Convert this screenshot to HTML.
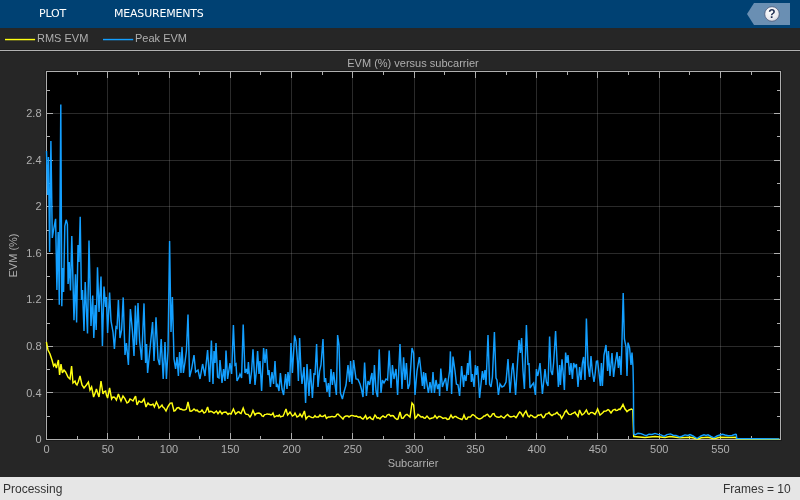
<!DOCTYPE html>
<html><head><meta charset="utf-8"><title>EVM</title>
<style>
html,body{margin:0;padding:0;background:#262626;}
body{width:800px;height:500px;overflow:hidden;position:relative;font-family:"Liberation Sans",sans-serif;}
#tb{position:absolute;left:0;top:0;width:800px;height:28px;background:#004173;}
#tb span{position:absolute;top:7px;font:11px "DejaVu Sans",sans-serif;color:#fff;letter-spacing:-0.2px;will-change:transform;}
#help{position:absolute;left:747px;top:3px;width:43px;height:22px;}
#leg{position:absolute;left:0;top:28px;width:800px;height:21px;background:#262626;border-bottom:1px solid #202020;box-shadow:0 1px 0 #b2b2b2,0 2px 0 #202020;}
#leg span{position:absolute;top:4px;font-size:11px;color:#afafaf;will-change:transform;}
#st{position:absolute;left:0;top:477px;width:800px;height:23px;background:#e6e6e6;font-size:12px;color:#333;}
#st span{position:absolute;top:5px;will-change:transform;}
svg text{font-family:"Liberation Sans",sans-serif;font-size:11px;fill:#afafaf;}
</style></head><body>
<div id="tb"><span style="left:39px">PLOT</span><span style="left:114px">MEASUREMENTS</span>
<svg id="help" viewBox="0 0 43 22" style="will-change:transform"><polygon points="0,11 7,0 43,0 43,22 7,22" fill="#6a8fb3"/>
<defs><radialGradient id="hg" cx="0.4" cy="0.3" r="0.8"><stop offset="0" stop-color="#fff"/><stop offset="0.7" stop-color="#e8e8ee"/><stop offset="1" stop-color="#b9bccb"/></radialGradient></defs>
<circle cx="25" cy="11" r="7.3" fill="url(#hg)" stroke="#4a5878" stroke-width="0.8"/>
<text x="24.9" y="15.2" text-anchor="middle" style="font:bold 12px 'Liberation Sans',sans-serif;fill:#1d2b4f">?</text></svg>
</div>
<div id="leg"><span style="left:37px">RMS EVM</span><span style="left:135px">Peak EVM</span></div>
<svg width="800" height="500" style="position:absolute;left:0;top:0;will-change:transform" viewBox="0 0 800 500">
<line x1="5" y1="39.55" x2="35.1" y2="39.55" stroke="#ffff11" stroke-width="1.45"/><line x1="103" y1="39.55" x2="133.2" y2="39.55" stroke="#139fff" stroke-width="1.45"/>
<rect x="45.5" y="70.5" width="736" height="370" fill="none" stroke="#1a1a1a" stroke-width="1"/>
<rect x="46.5" y="71.5" width="734" height="368" fill="#000" stroke="#afafaf" stroke-width="1"/>
<g stroke="#afafaf" stroke-opacity="0.24" stroke-width="1" shape-rendering="crispEdges"><line x1="107.5" y1="72" x2="107.5" y2="439"/><line x1="169.5" y1="72" x2="169.5" y2="439"/><line x1="230.5" y1="72" x2="230.5" y2="439"/><line x1="291.5" y1="72" x2="291.5" y2="439"/><line x1="352.5" y1="72" x2="352.5" y2="439"/><line x1="414.5" y1="72" x2="414.5" y2="439"/><line x1="475.5" y1="72" x2="475.5" y2="439"/><line x1="536.5" y1="72" x2="536.5" y2="439"/><line x1="597.5" y1="72" x2="597.5" y2="439"/><line x1="659.5" y1="72" x2="659.5" y2="439"/><line x1="720.5" y1="72" x2="720.5" y2="439"/><line x1="47" y1="392.5" x2="780" y2="392.5"/><line x1="47" y1="346.5" x2="780" y2="346.5"/><line x1="47" y1="299.5" x2="780" y2="299.5"/><line x1="47" y1="253.5" x2="780" y2="253.5"/><line x1="47" y1="206.5" x2="780" y2="206.5"/><line x1="47" y1="160.5" x2="780" y2="160.5"/><line x1="47" y1="113.5" x2="780" y2="113.5"/></g>
<g stroke="#afafaf" stroke-width="1" shape-rendering="crispEdges"><line x1="77.5" y1="439" x2="77.5" y2="436"/><line x1="77.5" y1="72" x2="77.5" y2="75"/><line x1="107.5" y1="439" x2="107.5" y2="433"/><line x1="107.5" y1="72" x2="107.5" y2="78"/><line x1="138.5" y1="439" x2="138.5" y2="436"/><line x1="138.5" y1="72" x2="138.5" y2="75"/><line x1="169.5" y1="439" x2="169.5" y2="433"/><line x1="169.5" y1="72" x2="169.5" y2="78"/><line x1="199.5" y1="439" x2="199.5" y2="436"/><line x1="199.5" y1="72" x2="199.5" y2="75"/><line x1="230.5" y1="439" x2="230.5" y2="433"/><line x1="230.5" y1="72" x2="230.5" y2="78"/><line x1="260.5" y1="439" x2="260.5" y2="436"/><line x1="260.5" y1="72" x2="260.5" y2="75"/><line x1="291.5" y1="439" x2="291.5" y2="433"/><line x1="291.5" y1="72" x2="291.5" y2="78"/><line x1="322.5" y1="439" x2="322.5" y2="436"/><line x1="322.5" y1="72" x2="322.5" y2="75"/><line x1="352.5" y1="439" x2="352.5" y2="433"/><line x1="352.5" y1="72" x2="352.5" y2="78"/><line x1="383.5" y1="439" x2="383.5" y2="436"/><line x1="383.5" y1="72" x2="383.5" y2="75"/><line x1="414.5" y1="439" x2="414.5" y2="433"/><line x1="414.5" y1="72" x2="414.5" y2="78"/><line x1="444.5" y1="439" x2="444.5" y2="436"/><line x1="444.5" y1="72" x2="444.5" y2="75"/><line x1="475.5" y1="439" x2="475.5" y2="433"/><line x1="475.5" y1="72" x2="475.5" y2="78"/><line x1="506.5" y1="439" x2="506.5" y2="436"/><line x1="506.5" y1="72" x2="506.5" y2="75"/><line x1="536.5" y1="439" x2="536.5" y2="433"/><line x1="536.5" y1="72" x2="536.5" y2="78"/><line x1="567.5" y1="439" x2="567.5" y2="436"/><line x1="567.5" y1="72" x2="567.5" y2="75"/><line x1="597.5" y1="439" x2="597.5" y2="433"/><line x1="597.5" y1="72" x2="597.5" y2="78"/><line x1="628.5" y1="439" x2="628.5" y2="436"/><line x1="628.5" y1="72" x2="628.5" y2="75"/><line x1="659.5" y1="439" x2="659.5" y2="433"/><line x1="659.5" y1="72" x2="659.5" y2="78"/><line x1="689.5" y1="439" x2="689.5" y2="436"/><line x1="689.5" y1="72" x2="689.5" y2="75"/><line x1="720.5" y1="439" x2="720.5" y2="433"/><line x1="720.5" y1="72" x2="720.5" y2="78"/><line x1="751.5" y1="439" x2="751.5" y2="436"/><line x1="751.5" y1="72" x2="751.5" y2="75"/><line x1="47" y1="416.5" x2="50" y2="416.5"/><line x1="780" y1="416.5" x2="777" y2="416.5"/><line x1="47" y1="392.5" x2="53" y2="392.5"/><line x1="780" y1="392.5" x2="774" y2="392.5"/><line x1="47" y1="369.5" x2="50" y2="369.5"/><line x1="780" y1="369.5" x2="777" y2="369.5"/><line x1="47" y1="346.5" x2="53" y2="346.5"/><line x1="780" y1="346.5" x2="774" y2="346.5"/><line x1="47" y1="323.5" x2="50" y2="323.5"/><line x1="780" y1="323.5" x2="777" y2="323.5"/><line x1="47" y1="299.5" x2="53" y2="299.5"/><line x1="780" y1="299.5" x2="774" y2="299.5"/><line x1="47" y1="276.5" x2="50" y2="276.5"/><line x1="780" y1="276.5" x2="777" y2="276.5"/><line x1="47" y1="253.5" x2="53" y2="253.5"/><line x1="780" y1="253.5" x2="774" y2="253.5"/><line x1="47" y1="230.5" x2="50" y2="230.5"/><line x1="780" y1="230.5" x2="777" y2="230.5"/><line x1="47" y1="206.5" x2="53" y2="206.5"/><line x1="780" y1="206.5" x2="774" y2="206.5"/><line x1="47" y1="183.5" x2="50" y2="183.5"/><line x1="780" y1="183.5" x2="777" y2="183.5"/><line x1="47" y1="160.5" x2="53" y2="160.5"/><line x1="780" y1="160.5" x2="774" y2="160.5"/><line x1="47" y1="136.5" x2="50" y2="136.5"/><line x1="780" y1="136.5" x2="777" y2="136.5"/><line x1="47" y1="113.5" x2="53" y2="113.5"/><line x1="780" y1="113.5" x2="774" y2="113.5"/><line x1="47" y1="90.5" x2="50" y2="90.5"/><line x1="780" y1="90.5" x2="777" y2="90.5"/></g>
<text x="413" y="67" text-anchor="middle">EVM (%) versus subcarrier</text>
<text x="413" y="467" text-anchor="middle">Subcarrier</text>
<text transform="translate(17,255.5) rotate(-90)" text-anchor="middle">EVM (%)</text>
<text x="46.5" y="453" text-anchor="middle">0</text><text x="107.8" y="453" text-anchor="middle">50</text><text x="169.0" y="453" text-anchor="middle">100</text><text x="230.3" y="453" text-anchor="middle">150</text><text x="291.6" y="453" text-anchor="middle">200</text><text x="352.8" y="453" text-anchor="middle">250</text><text x="414.1" y="453" text-anchor="middle">300</text><text x="475.4" y="453" text-anchor="middle">350</text><text x="536.7" y="453" text-anchor="middle">400</text><text x="597.9" y="453" text-anchor="middle">450</text><text x="659.2" y="453" text-anchor="middle">500</text><text x="720.5" y="453" text-anchor="middle">550</text>
<text x="41.5" y="443.1" text-anchor="end">0</text><text x="41.5" y="396.5" text-anchor="end">0.4</text><text x="41.5" y="350.0" text-anchor="end">0.8</text><text x="41.5" y="303.4" text-anchor="end">1.2</text><text x="41.5" y="256.8" text-anchor="end">1.6</text><text x="41.5" y="210.2" text-anchor="end">2</text><text x="41.5" y="163.7" text-anchor="end">2.4</text><text x="41.5" y="117.1" text-anchor="end">2.8</text>
<path d="M46.4 342.0 L48.0 350.0 L49.0 352.0 L50.0 354.0 L52.0 360.0 L53.6 366.0 L55.0 364.0 L56.4 368.0 L57.5 363.5 L58.4 360.0 L59.6 375.0 L61.0 364.0 L62.4 373.0 L64.0 370.0 L65.6 372.0 L68.0 377.0 L70.0 379.0 L71.6 366.0 L73.0 383.0 L75.0 381.0 L75.9 383.8 L77.0 385.0 L78.4 381.5 L80.0 376.0 L82.0 385.0 L84.0 388.0 L86.4 385.0 L88.4 382.0 L90.0 390.0 L91.6 387.0 L93.6 397.0 L95.5 392.1 L96.4 389.0 L98.0 394.1 L99.0 397.0 L101.0 381.0 L103.0 394.0 L104.1 391.8 L105.6 391.0 L106.5 395.4 L107.6 398.0 L109.6 388.0 L111.6 399.0 L112.7 397.2 L114.0 397.0 L115.1 397.9 L116.4 400.0 L118.4 394.0 L120.0 398.4 L121.0 401.0 L123.0 396.0 L124.9 398.6 L127.0 403.0 L128.6 401.9 L130.0 399.0 L131.1 399.5 L133.0 401.0 L134.7 397.6 L135.6 396.0 L137.0 405.0 L139.0 401.0 L140.9 402.3 L142.0 402.0 L144.0 399.0 L146.0 407.0 L147.0 404.8 L148.0 403.0 L149.4 404.5 L151.0 405.0 L151.9 404.8 L153.0 404.0 L154.4 407.0 L156.4 402.0 L158.0 405.2 L159.0 408.0 L160.5 406.8 L162.0 405.0 L162.9 407.1 L164.1 407.9 L166.0 411.0 L167.8 406.9 L169.0 405.0 L170.3 403.1 L172.0 403.0 L174.0 411.0 L175.2 410.7 L177.0 408.0 L178.8 407.5 L180.1 409.2 L181.0 409.0 L182.5 409.7 L184.0 410.0 L185.0 409.9 L186.4 409.0 L188.0 402.0 L190.0 411.0 L191.1 411.2 L192.3 410.7 L194.0 409.0 L194.0 409.0 L196.0 410.8 L197.0 410.0 L198.4 411.6 L199.6 412.0 L200.9 411.5 L202.0 410.0 L204.0 413.0 L205.6 412.0 L207.6 407.0 L209.0 412.0 L210.7 411.3 L212.0 411.6 L214.0 413.0 L216.4 411.0 L218.0 413.6 L220.0 411.0 L222.0 414.0 L223.0 412.6 L224.2 412.3 L226.0 412.0 L228.0 414.4 L229.1 413.4 L231.0 414.0 L233.4 409.0 L235.6 414.0 L238.0 412.0 L238.9 411.8 L240.1 413.2 L241.0 413.6 L243.2 408.0 L245.0 413.0 L246.2 414.2 L248.0 414.4 L250.0 417.0 L251.1 415.4 L253.0 410.4 L255.0 415.0 L256.0 413.7 L257.3 413.2 L259.0 413.0 L260.9 414.1 L262.0 416.0 L263.4 416.4 L264.6 414.6 L266.0 414.4 L267.1 413.9 L268.3 414.2 L269.5 414.3 L271.0 415.0 L272.0 414.4 L273.0 413.0 L274.4 417.0 L275.6 416.4 L277.0 415.6 L278.1 416.3 L279.3 414.9 L280.5 416.8 L282.0 416.4 L283.0 416.2 L284.0 414.0 L286.0 409.0 L287.6 415.0 L289.1 413.3 L290.0 412.0 L292.4 416.0 L294.0 415.0 L295.0 413.0 L297.0 417.0 L298.9 416.0 L300.0 414.0 L302.0 417.0 L304.4 411.0 L306.0 419.0 L307.5 417.0 L309.0 416.0 L310.0 416.6 L312.0 417.6 L313.6 417.5 L315.0 415.6 L316.1 417.1 L317.0 417.0 L318.5 417.0 L320.0 415.0 L321.0 416.2 L323.0 416.4 L325.0 415.0 L326.4 418.4 L328.3 417.0 L330.0 417.0 L332.0 416.4 L334.0 417.0 L335.7 416.3 L336.9 414.3 L338.0 414.0 L339.4 415.6 L341.0 417.0 L343.0 419.0 L344.3 416.8 L346.0 416.0 L347.9 416.0 L349.0 417.0 L350.4 415.9 L351.6 415.4 L353.0 415.6 L354.0 416.0 L355.3 416.3 L356.5 416.0 L358.0 417.0 L359.0 417.2 L360.2 416.8 L361.4 418.1 L363.0 419.0 L363.9 418.0 L365.6 415.6 L367.0 419.0 L368.8 417.6 L370.0 417.0 L371.2 418.6 L373.0 419.6 L375.0 415.0 L376.1 416.3 L377.0 418.0 L378.6 417.7 L380.0 419.0 L381.0 417.5 L383.0 416.0 L384.7 417.2 L386.0 417.0 L387.2 415.0 L389.0 414.4 L390.8 416.2 L392.0 415.6 L393.3 415.7 L395.0 418.0 L397.0 419.5 L398.0 419.0 L400.0 412.0 L401.6 418.0 L403.1 418.2 L404.0 417.0 L405.5 415.1 L407.0 414.4 L408.0 415.2 L410.0 417.0 L412.0 403.0 L413.6 405.0 L415.0 418.4 L416.6 416.8 L418.0 414.4 L419.0 415.1 L421.0 417.0 L422.7 416.7 L424.0 418.0 L425.1 418.2 L427.0 416.0 L429.6 419.0 L432.0 418.0 L433.7 417.6 L435.0 415.6 L437.0 418.4 L438.6 416.5 L440.0 416.4 L441.1 417.0 L443.0 418.4 L444.7 417.9 L446.0 418.0 L447.2 419.4 L449.0 419.0 L451.0 415.0 L452.1 417.0 L453.0 418.0 L454.6 416.5 L456.0 416.4 L457.0 417.4 L459.0 418.4 L460.7 419.0 L462.0 419.6 L463.1 417.5 L464.0 415.0 L465.6 419.0 L466.8 419.2 L468.0 417.1 L469.0 417.0 L470.5 417.1 L472.0 415.0 L472.9 414.5 L475.0 416.0 L476.6 417.7 L478.0 418.4 L479.1 418.9 L480.3 418.8 L482.0 418.0 L484.0 416.0 L485.0 416.0 L486.4 414.7 L487.6 414.4 L488.9 416.2 L490.0 417.0 L491.3 416.0 L492.5 413.8 L494.0 413.6 L495.0 415.8 L497.0 417.0 L498.7 417.3 L499.9 417.1 L501.0 416.0 L502.3 417.0 L504.0 418.0 L506.0 415.7 L507.6 414.4 L508.5 415.5 L509.7 416.5 L511.0 417.0 L513.0 416.4 L514.0 416.0 L516.0 417.6 L517.0 416.3 L518.3 413.9 L519.6 412.0 L520.7 412.6 L521.9 414.6 L523.0 416.4 L524.4 413.3 L526.0 411.0 L528.0 416.0 L529.3 416.9 L530.5 415.1 L532.0 415.6 L533.0 416.6 L535.0 417.6 L536.7 416.6 L538.0 415.0 L539.1 415.3 L541.0 414.4 L543.0 417.6 L544.0 417.4 L546.0 414.0 L547.7 413.7 L549.0 412.4 L550.1 414.2 L552.0 415.6 L553.8 414.1 L555.0 414.0 L557.0 412.4 L558.7 414.7 L560.0 415.0 L561.6 418.4 L563.6 415.0 L564.8 412.2 L566.4 410.4 L567.3 412.3 L569.0 414.4 L571.0 414.6 L572.0 413.6 L573.4 413.1 L575.0 412.0 L575.9 413.9 L577.1 415.0 L578.0 416.4 L579.6 410.0 L580.8 412.7 L582.0 415.0 L584.0 413.6 L586.4 410.0 L588.1 413.8 L589.0 414.4 L590.6 412.6 L592.0 412.4 L593.0 412.9 L595.0 414.4 L596.7 411.1 L597.6 409.0 L600.0 415.0 L601.6 413.8 L603.0 412.4 L604.0 411.2 L606.0 411.0 L608.0 409.6 L608.9 410.1 L611.0 413.0 L613.0 410.0 L615.1 409.4 L616.0 410.4 L617.5 410.2 L619.0 409.0 L620.0 409.5 L621.0 408.0 L623.0 404.4 L625.0 409.0 L626.1 410.3 L627.0 411.6 L629.0 410.0 L631.6 409.0 L632.8 410.0 L633.7 436.5 L645.0 437.5 L655.0 436.5 L665.0 437.5 L670.0 436.5 L680.0 437.8 L690.0 437.2 L694.0 438.0 L697.5 439.2 L701.0 437.8 L708.0 437.2 L714.0 438.8 L720.0 437.2 L730.0 437.5 L736.0 437.2 L736.6 439.1 L779.3 439.2" fill="none" stroke="#ffff11" stroke-width="1.45" stroke-linejoin="miter" stroke-miterlimit="3"/>
<path d="M46.5 151.0 L47.6 195.0 L48.5 157.0 L49.6 252.0 L50.9 141.0 L52.3 238.0 L53.9 228.0 L55.6 218.8 L56.9 290.0 L58.2 232.0 L59.3 304.7 L60.8 104.5 L61.8 306.3 L62.7 268.0 L63.6 292.0 L64.8 226.0 L66.2 219.8 L67.4 224.0 L68.1 284.0 L69.2 262.0 L70.5 290.5 L71.8 236.0 L74.0 320.3 L75.5 274.3 L76.6 322.5 L78.0 245.0 L79.0 262.0 L80.2 216.7 L81.5 300.0 L82.5 290.0 L84.0 331.0 L85.2 282.0 L87.5 333.5 L89.0 240.4 L91.0 326.0 L92.7 295.5 L93.8 338.0 L95.2 305.0 L96.2 330.0 L97.5 267.3 L99.0 312.0 L101.0 276.5 L102.4 346.0 L104.0 286.5 L105.6 307.0 L106.4 297.0 L107.6 333.0 L109.6 292.6 L111.0 321.0 L113.0 332.0 L114.4 349.0 L116.0 327.0 L117.0 328.0 L118.4 300.0 L120.0 338.0 L121.6 330.0 L123.2 297.4 L125.0 355.0 L126.4 343.0 L128.4 365.0 L130.4 309.0 L132.4 331.0 L134.0 356.0 L135.4 305.4 L136.4 345.0 L138.0 303.0 L139.6 341.0 L141.6 360.0 L144.0 303.4 L145.6 363.0 L146.6 344.0 L147.6 373.0 L150.0 349.0 L152.6 322.0 L154.0 361.0 L156.0 317.4 L158.0 359.0 L159.6 365.0 L161.2 339.0 L163.2 379.0 L165.0 342.0 L166.4 379.0 L168.0 351.0 L169.6 241.0 L171.0 332.0 L172.4 297.0 L174.0 359.0 L175.6 369.0 L177.0 357.0 L178.4 376.0 L179.6 352.0 L181.0 373.0 L182.0 347.0 L183.4 373.0 L185.0 362.0 L186.4 351.0 L188.0 314.6 L189.6 377.0 L191.6 369.0 L194.0 355.0 L195.6 372.0 L198.0 370.0 L200.0 379.0 L202.6 364.0 L205.0 376.0 L205.0 375.0 L207.6 350.0 L209.6 382.0 L211.4 340.6 L213.0 384.0 L214.0 351.0 L215.0 363.0 L216.0 343.0 L217.6 377.0 L219.0 378.0 L220.0 360.0 L222.0 383.0 L223.6 369.0 L225.0 381.0 L226.0 350.6 L227.6 379.0 L230.0 363.0 L231.6 374.0 L233.4 325.0 L235.0 365.0 L236.0 364.0 L237.0 381.0 L238.9 377.1 L240.0 374.0 L241.6 378.0 L243.2 324.6 L245.0 373.0 L246.4 369.0 L247.6 374.0 L248.4 362.0 L250.0 384.0 L251.6 371.0 L253.0 349.4 L255.0 385.0 L256.4 371.0 L257.6 351.0 L259.0 374.0 L260.0 361.0 L261.6 391.0 L263.6 348.0 L265.0 363.0 L266.4 349.0 L268.0 375.0 L269.0 370.0 L270.4 387.0 L272.0 372.0 L273.6 384.0 L275.0 361.0 L276.4 387.0 L277.6 385.0 L279.0 391.0 L280.4 373.0 L282.0 389.0 L283.6 395.0 L285.6 374.0 L287.0 389.0 L288.0 372.0 L289.6 386.0 L291.0 343.0 L292.4 373.0 L294.6 335.4 L296.0 341.0 L297.6 363.0 L298.4 381.0 L299.6 338.0 L301.0 371.0 L302.0 384.0 L304.0 367.0 L305.6 403.0 L307.0 364.0 L309.0 396.0 L310.4 369.0 L312.4 398.0 L314.0 373.0 L315.0 375.0 L316.6 344.0 L318.0 387.0 L319.6 371.0 L321.0 365.0 L323.0 339.0 L324.4 382.0 L325.6 378.0 L327.0 392.0 L328.4 383.0 L329.6 397.0 L331.0 369.0 L332.4 385.0 L333.6 372.0 L335.0 384.0 L336.4 395.0 L337.6 335.0 L339.0 345.0 L340.4 393.0 L342.4 399.0 L344.0 392.0 L346.0 385.0 L348.0 365.0 L349.6 382.0 L350.6 361.0 L352.0 384.0 L353.6 360.0 L356.0 379.0 L358.0 379.4 L360.0 384.0 L361.4 389.0 L363.0 397.0 L364.6 362.6 L366.4 396.0 L368.0 381.0 L369.6 385.0 L371.0 377.0 L372.0 373.0 L373.0 395.0 L374.4 365.0 L376.0 391.0 L377.6 397.0 L379.2 349.4 L381.0 393.0 L382.4 380.0 L384.0 383.0 L386.0 379.0 L387.6 380.0 L389.2 350.6 L391.0 388.0 L392.4 365.0 L394.0 379.0 L396.0 369.0 L397.6 395.0 L400.0 344.0 L402.0 389.0 L403.6 357.4 L405.0 380.0 L406.4 363.0 L408.0 389.0 L409.6 384.0 L412.0 348.0 L413.6 353.0 L415.0 395.0 L417.0 371.0 L419.4 357.0 L421.0 371.0 L422.4 386.0 L423.6 372.0 L424.4 389.0 L425.6 373.0 L427.0 384.0 L428.4 393.0 L430.0 382.0 L431.6 393.0 L433.0 372.0 L434.4 393.0 L436.0 380.0 L437.6 389.0 L439.0 384.0 L439.6 396.0 L440.8 368.6 L442.4 387.0 L444.0 382.0 L445.6 378.0 L447.0 391.0 L448.4 379.0 L449.6 371.0 L450.4 351.4 L451.6 394.0 L453.0 356.6 L455.0 371.0 L456.4 384.0 L458.0 385.0 L459.6 396.0 L461.6 366.0 L463.6 387.0 L464.4 375.0 L466.0 381.0 L467.6 363.0 L468.4 375.0 L470.0 350.6 L471.4 382.0 L472.4 374.0 L474.0 387.0 L475.4 365.0 L476.4 375.0 L477.6 366.0 L479.6 398.0 L481.0 384.0 L482.4 371.0 L483.6 380.0 L485.0 370.0 L486.0 385.0 L488.0 335.0 L489.6 384.0 L491.0 387.0 L492.4 377.0 L494.4 332.0 L496.0 378.0 L497.0 380.0 L498.4 395.0 L500.0 384.0 L502.0 387.0 L504.0 386.0 L506.0 382.0 L508.0 359.0 L510.0 393.0 L512.0 369.0 L513.0 363.0 L514.0 374.0 L515.6 395.0 L517.0 371.0 L519.0 340.0 L520.4 353.0 L521.6 338.0 L523.0 371.0 L524.4 389.0 L526.4 325.0 L528.0 365.0 L529.0 363.0 L530.0 388.0 L532.0 385.0 L533.6 383.0 L535.4 395.0 L536.4 369.0 L537.6 376.0 L538.4 373.0 L540.0 363.0 L541.6 384.0 L542.4 394.0 L544.0 379.0 L545.0 369.0 L546.4 382.0 L548.0 386.0 L549.6 336.6 L551.0 371.0 L552.4 375.0 L553.6 363.0 L555.6 331.0 L557.0 361.0 L558.4 387.0 L559.6 365.0 L560.4 385.0 L562.0 359.4 L563.0 371.0 L564.4 390.0 L565.6 352.6 L567.0 363.0 L568.0 355.0 L569.6 375.0 L571.0 363.0 L572.4 379.0 L573.6 363.0 L575.0 367.0 L576.4 364.0 L578.0 387.0 L579.6 367.0 L581.0 380.0 L582.4 363.0 L583.6 357.0 L585.0 380.0 L586.4 318.6 L588.0 365.0 L589.6 377.0 L591.0 356.0 L592.4 372.0 L594.0 382.0 L595.0 375.0 L596.4 361.4 L597.6 361.0 L599.0 373.0 L600.4 386.0 L601.4 363.0 L602.4 386.0 L604.0 355.0 L606.0 345.0 L607.6 371.0 L608.4 351.0 L610.0 376.0 L612.0 353.0 L613.6 377.0 L615.0 365.0 L617.0 352.0 L618.4 368.0 L619.6 356.0 L621.0 375.0 L622.0 341.0 L623.2 293.0 L624.4 339.0 L626.0 347.0 L627.0 376.0 L628.0 342.6 L629.6 348.0 L631.0 365.0 L632.0 352.6 L633.0 367.0 L633.4 385.0 L633.7 433.9 L635.0 434.9 L638.0 433.2 L641.0 433.6 L644.0 434.9 L646.2 435.6 L649.0 434.2 L652.0 434.4 L655.0 433.4 L658.0 434.4 L661.0 434.9 L664.0 436.4 L667.0 434.6 L670.5 433.9 L673.0 435.2 L676.0 435.4 L679.5 436.9 L682.0 436.2 L685.0 434.9 L688.0 435.4 L690.0 434.5 L693.0 436.0 L697.0 438.5 L701.0 436.0 L704.0 434.8 L706.0 435.5 L708.0 434.8 L711.0 436.5 L714.0 437.8 L717.0 436.0 L720.0 435.0 L722.5 434.2 L725.0 435.0 L728.0 435.8 L732.0 435.5 L735.5 434.2 L736.3 434.5 L736.8 438.6 L779.3 438.9" fill="none" stroke="#139fff" stroke-width="1.45" stroke-linejoin="miter" stroke-miterlimit="3"/>
</svg>
<div id="st"><span style="left:3px">Processing</span><span style="right:9px">Frames = 10</span></div>
</body></html>
